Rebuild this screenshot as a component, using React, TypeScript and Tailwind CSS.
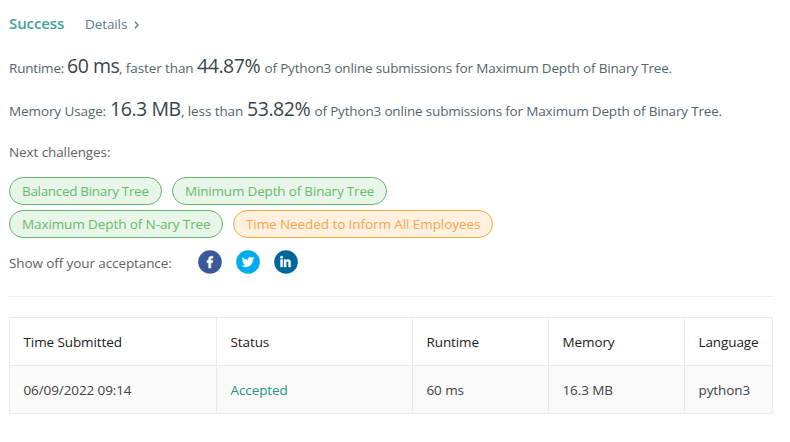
import React from 'react';

type StatProps = {
  label: string;
  labelClass: string;
  value: string;
  valueWidth: string;
  compare: string;
  compareWidth: string;
  percent: string;
};

function StatLine({ label, labelClass, value, valueWidth, compare, compareWidth, percent }: StatProps) {
  return (
    <div className="flex h-[43px] items-baseline whitespace-nowrap leading-[43px] text-[#54666c]">
      <span className={labelClass}>{label}</span>
      <span className={`${valueWidth} text-[19.5px] tracking-[-0.45px] text-[#37474f]`}>{value}</span>
      <span className={compareWidth}>{compare}</span>
      <span className="w-[67.5px] text-[19.5px] tracking-[-0.45px] text-[#37474f]">{percent}</span>
      <span className="tracking-[-0.17px]">of Python3 online submissions for Maximum Depth of Binary Tree.</span>
    </div>
  );
}

function Pill({ children, className }: { children: React.ReactNode; className: string }) {
  return (
    <a className={`flex h-7 items-center whitespace-nowrap rounded-full border pl-3 ${className}`}>
      {children}
    </a>
  );
}

const GREEN = 'border-[#66b56a] bg-[#e8f5e9] text-[#6cb870]';
const ORANGE = 'border-[#f5a73b] bg-[#fff0e0] text-[#f5a64a]';

export default function App() {
  return (
    <div className="h-[442px] w-[790px] overflow-hidden bg-white pl-[9px] pr-[17px] font-['Open_Sans','Noto_Sans',sans-serif] text-[13.5px] tracking-[-0.1px]">
      <div className="flex h-[44px] items-center pt-[2px]">
        <span className="w-[76px] text-[15px] font-semibold tracking-[-0.1px] text-[#43a395]">Success</span>
        <span className="w-[49px] pt-[2px] text-[#607d8b]">Details</span>
        <svg className="mt-[4px]" width="5" height="8" viewBox="0 0 5 8" fill="none" stroke="#607d8b" strokeWidth="1.4">
          <path d="M1 .8 4 4 1 7.2" />
        </svg>
      </div>
      <StatLine label="Runtime:" labelClass="w-[58px] tracking-[-0.2px]" value="60 ms" valueWidth="w-[52px]" compare=", faster than" compareWidth="w-[78px]" percent="44.87%" />
      <StatLine label="Memory Usage:" labelClass="w-[101px]" value="16.3 MB" valueWidth="w-[71px]" compare=", less than" compareWidth="w-[66px]" percent="53.82%" />
      <div className="flex h-[47px] items-center pb-[3px] text-[#616161]">Next challenges:</div>
      <div className="flex gap-[10px]">
        <Pill className={`w-[153px] tracking-[-0.32px] ${GREEN}`}>Balanced Binary Tree</Pill>
        <Pill className={`w-[215px] tracking-[-0.18px] ${GREEN}`}>Minimum Depth of Binary Tree</Pill>
      </div>
      <div className="mt-[5px] flex gap-[10px]">
        <Pill className={`w-[214px] ${GREEN}`}>Maximum Depth of N-ary Tree</Pill>
        <Pill className={`w-[260px] tracking-[-0.08px] ${ORANGE}`}>Time Needed to Inform All Employees</Pill>
      </div>
      <div className="flex h-[59px] items-start border-b border-[#eeeeee] pt-[12px] text-[#616161]">
        <span className="w-[189px] pt-[3px]">Show off your acceptance:</span>
        <div className="flex gap-[14px]">
          <svg width="24" height="24" viewBox="0 0 64 64">
            <circle cx="32" cy="32" r="31.5" fill="#3b5998" />
            <path fill="#fff" stroke="#fff" strokeWidth="1.6" d="M34.1 48V33.8h4.6l.7-5.5h-5.3v-3.6c0-1.5.4-2.6 2.6-2.6h2.8v-5c-.5-.1-2.2-.2-4.1-.2-4.1 0-6.9 2.5-6.9 7.2v4.2H24v5.5h4.5V48h5.6z" />
          </svg>
          <svg width="24" height="24" viewBox="0 0 64 64">
            <circle cx="32" cy="32" r="31.5" fill="#00aced" />
            <path fill="#fff" stroke="#fff" strokeWidth="1" d="M48 22.1c-1.2.5-2.4.9-3.8 1 1.4-.8 2.4-2.1 2.9-3.6-1.3.8-2.7 1.3-4.2 1.6-1.2-1.3-2.9-2.1-4.8-2.1-3.6 0-6.6 2.9-6.6 6.6 0 .5.1 1 .2 1.5-5.5-.3-10.3-2.9-13.5-6.9-.6 1-.9 2.1-.9 3.3 0 2.3 1.2 4.3 2.9 5.5-1.1 0-2.1-.3-3-.8v.1c0 3.2 2.3 5.8 5.3 6.4-.6.1-1.1.2-1.7.2-.4 0-.8 0-1.2-.1.8 2.6 3.3 4.5 6.1 4.6-2.2 1.8-5.1 2.8-8.2 2.8-.5 0-1.1 0-1.6-.1 2.9 1.9 6.4 2.9 10.1 2.9 12.1 0 18.7-10 18.7-18.7v-.8c1.3-.9 2.4-2.1 3.3-3.4z" />
          </svg>
          <svg width="24" height="24" viewBox="0 0 64 64">
            <circle cx="32" cy="32" r="31.5" fill="#006699" />
            <g fill="#fff" stroke="#fff" strokeWidth="1">
              <circle cx="20.2" cy="19.4" r="3.2" />
              <path d="M17.4 25.4h5.6V45h-5.6zM26.9 25.4h5.4V28c.8-1.5 2.7-3 5.4-3 5.6 0 6.7 3.7 6.7 8.7V45h-5.6v-10.2c0-2.2 0-5-2.9-5s-3.4 2.4-3.4 4.8V45h-5.6z" />
            </g>
          </svg>
        </div>
      </div>
      <table className="mt-5 w-[764px] table-fixed border-collapse text-left [&_td]:border [&_td]:border-[#eaeaea] [&_td]:pb-0 [&_td]:pl-[13.5px] [&_td]:pr-0 [&_td]:pt-[1px] [&_th]:border [&_th]:border-[#eaeaea] [&_th]:pb-0 [&_th]:pl-[13.5px] [&_th]:pr-0 [&_th]:pt-[1px] [&_th]:font-normal">
        <colgroup>
          <col className="w-[207px]" />
          <col className="w-[196px]" />
          <col className="w-[136px]" />
          <col className="w-[136px]" />
          <col className="w-[88px]" />
        </colgroup>
        <thead>
          <tr className="h-12 text-[#212121]">
            <th>Time Submitted</th>
            <th>Status</th>
            <th>Runtime</th>
            <th>Memory</th>
            <th>Language</th>
          </tr>
        </thead>
        <tbody>
          <tr className="h-12 bg-[#fafafa] text-[#424242]">
            <td>06/09/2022 09:14</td>
            <td className="text-[#26947f]">Accepted</td>
            <td>60 ms</td>
            <td>16.3 MB</td>
            <td>python3</td>
          </tr>
        </tbody>
      </table>
    </div>
  );
}
